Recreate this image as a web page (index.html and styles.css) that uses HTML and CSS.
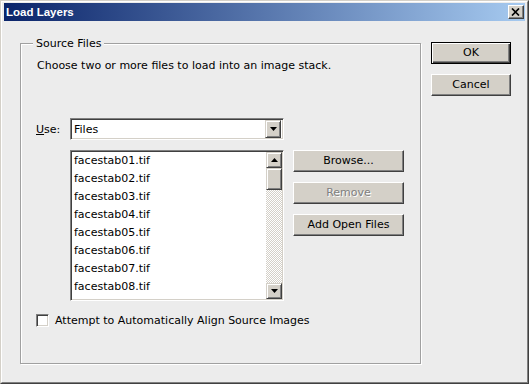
FILE: index.html
```html
<!DOCTYPE html>
<html>
<head>
<meta charset="utf-8">
<title>Load Layers</title>
<link rel="stylesheet" href="styles.css">
</head>
<body>
<div class="window">
  <div class="frame">
    <div class="titlebar">
      <span class="title">Load Layers</span>
      <span class="close">
        <svg width="9" height="8" viewBox="0 0 9 8"><path d="M1 0.5 L8 7.5 M8 0.5 L1 7.5" stroke="#000" stroke-width="1.7" fill="none"/></svg>
      </span>
    </div>
    <div class="content">
      <div class="group">
        <span class="legend">Source Files</span>
        <p class="intro">Choose two or more files to load into an image stack.</p>
        <div class="use-row">
          <span class="use-label"><u>U</u>se:</span>
          <div class="select">
            <span>Files</span>
            <span class="sbtn"><svg width="7" height="4" viewBox="0 0 7 4"><polygon points="0,0 7,0 3.5,4" fill="#000"/></svg></span>
          </div>
        </div>
        <div class="list-row">
          <div class="listbox">
            <div class="items">
              <div class="item">facestab01.tif</div>
              <div class="item">facestab02.tif</div>
              <div class="item">facestab03.tif</div>
              <div class="item">facestab04.tif</div>
              <div class="item">facestab05.tif</div>
              <div class="item">facestab06.tif</div>
              <div class="item">facestab07.tif</div>
              <div class="item">facestab08.tif</div>
            </div>
            <div class="scrollbar">
              <span class="sbtn"><svg width="7" height="4" viewBox="0 0 7 4"><polygon points="0,4 7,4 3.5,0" fill="#000"/></svg></span>
              <span class="thumb"></span>
              <span class="track"></span>
              <span class="sbtn"><svg width="7" height="4" viewBox="0 0 7 4"><polygon points="0,0 7,0 3.5,4" fill="#000"/></svg></span>
            </div>
          </div>
          <div class="side">
            <button class="btn wide">Browse...</button>
            <button class="btn wide disabled">Remove</button>
            <button class="btn wide">Add Open Files</button>
          </div>
        </div>
        <div class="check-row">
          <span class="checkbox"></span>
          <span>Attempt to Automatically Align Source Images</span>
        </div>
      </div>
      <div class="main-buttons">
        <button class="btn default">OK</button>
        <button class="btn">Cancel</button>
      </div>
    </div>
  </div>
</div>
</body>
</html>
```
FILE: styles.css
```css
* { box-sizing: border-box; }
html, body { margin: 0; padding: 0; }
body {
  width: 529px;
  height: 384px;
  overflow: hidden;
  background: #ececec;
  font-family: "DejaVu Sans", "Liberation Sans", sans-serif;
  font-size: 11px;
  color: #000;
}
.window {
  width: 529px;
  height: 384px;
  border: 1px solid;
  border-color: #d4d0c8 #404040 #404040 #d4d0c8;
  background: #ececec;
}
.frame {
  height: 100%;
  border: 1px solid;
  border-color: #fff #808080 #808080 #fff;
  padding: 1px 2px 2px 2px;
}
.titlebar {
  height: 18px;
  background: linear-gradient(to right, #0a246a, #a6caf0);
  display: flex;
  align-items: center;
  justify-content: space-between;
  padding: 0 1px 0 2px;
}
.title {
  color: #fff;
  font: bold 11.5px "Liberation Sans", sans-serif;
}
.close {
  width: 16px;
  height: 14px;
  background: #d4d0c8;
  border: 1px solid;
  border-color: #fff #404040 #404040 #fff;
  box-shadow: inset -1px -1px #808080;
  display: flex;
  align-items: center;
  justify-content: center;
  padding: 0 1px 1px 0;
}
.close svg { display: block; }
.content {
  display: flex;
  align-items: flex-start;
  padding: 22px 0 0 16px;
}
.group {
  position: relative;
  width: 401px;
  height: 321px;
  border: 1px solid #a0a0a0;
  box-shadow: inset 1px 1px #fff, 1px 1px #fff;
  padding: 15px 0 0 15px;
}
.legend {
  position: absolute;
  left: 12px;
  top: -7px;
  padding: 0 3px;
  background: #ececec;
  line-height: 13px;
}
.intro {
  margin: 0 0 0 1px;
  line-height: 13px;
}
.use-row {
  display: flex;
  align-items: center;
  margin-top: 46px;
}
.use-label { width: 34px; }
.select {
  width: 214px;
  height: 22px;
  border: 1px solid;
  border-color: #808080 #fff #fff #808080;
  box-shadow: inset 1px 1px #404040, inset -1px -1px #d4d0c8;
  background: #fff;
  display: flex;
  align-items: center;
  justify-content: space-between;
  padding: 0 2px 0 3px;
}
.sbtn {
  width: 16px;
  height: 16px;
  background: #d4d0c8;
  border: 1px solid;
  border-color: #d4d0c8 #404040 #404040 #d4d0c8;
  box-shadow: inset 1px 1px #fff, inset -1px -1px #808080;
  display: flex;
  align-items: center;
  justify-content: center;
  flex: none;
}
.select .sbtn { height: 18px; }
.sbtn svg { display: block; }
.list-row {
  display: flex;
  align-items: flex-start;
  margin-top: 10px;
  margin-left: 34px;
}
.listbox {
  width: 214px;
  height: 151px;
  border: 1px solid;
  border-color: #808080 #fff #fff #808080;
  box-shadow: inset 1px 1px #404040, inset -1px -1px #d4d0c8;
  background: #fff;
  padding: 1px;
  display: flex;
}
.items {
  flex: 1;
  overflow: hidden;
  padding-left: 2px;
}
.item { line-height: 18px; height: 18px; white-space: nowrap; }
.scrollbar {
  width: 16px;
  display: flex;
  flex-direction: column;
}
.thumb {
  height: 22px;
  background: #d4d0c8;
  border: 1px solid;
  border-color: #d4d0c8 #404040 #404040 #d4d0c8;
  box-shadow: inset 1px 1px #fff, inset -1px -1px #808080;
}
.track {
  flex: 1;
  background: repeating-conic-gradient(#d4d0c8 0 25%, #fff 0 50%) 0 0 / 2px 2px;
}
.side {
  display: flex;
  flex-direction: column;
  gap: 10px;
  margin-left: 9px;
}
.btn {
  font: inherit;
  color: #000;
  width: 80px;
  height: 22px;
  padding: 0;
  background: #d4d0c8;
  border: 1px solid;
  border-color: #fff #404040 #404040 #fff;
  box-shadow: inset -1px -1px #808080;
  text-align: center;
  line-height: 18px;
}
.btn.wide { width: 111px; }
.btn.disabled { color: #808080; text-shadow: 1px 1px #fff; }
.btn.default {
  border-color: #000;
  box-shadow: inset 1px 1px #fff, inset -1px -1px #404040, inset -2px -2px #808080;
}
.check-row {
  display: flex;
  align-items: center;
  gap: 6px;
  margin-top: 13px;
}
.checkbox {
  width: 13px;
  height: 13px;
  background: #fff;
  border: 1px solid;
  border-color: #808080 #fff #fff #808080;
  box-shadow: inset 1px 1px #404040, inset -1px -1px #d4d0c8;
}
.main-buttons {
  display: flex;
  flex-direction: column;
  gap: 10px;
  margin-left: 10px;
  margin-top: -1px;
}
```
